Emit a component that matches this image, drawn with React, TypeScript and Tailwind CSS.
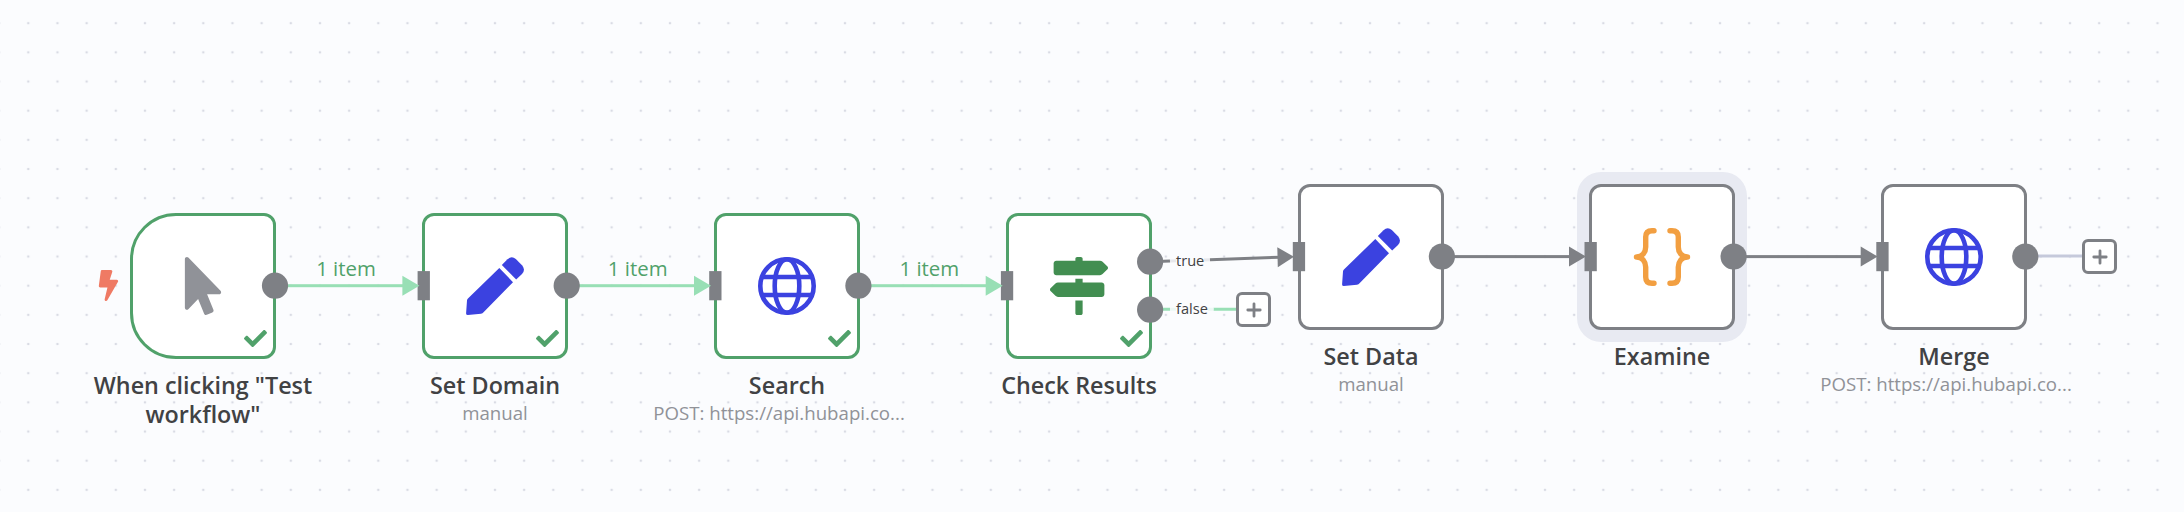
import { FaBolt, FaCheck, FaMapSigns, FaMousePointer } from "react-icons/fa";
import type { ReactNode } from "react";

const GREEN = "#98dfb5";
const GRAY = "#7e8085";

function Pen() {
  return (
    <svg viewBox="0 0 58 58" className="h-[58px] w-[58px]" fill="#3b42e0">
      <path d="M33.300 11 47 25.200 17.800 55Q16.600 56.400 15 56.800L1.800 58Q0 58 .1 56.200L1 43.500Q1.100 42 2.200 41.200Z" />
      <path d="M35.800 8 41.500 2.300Q45.500-1.500 49.800 2L56 8.200Q60 12.500 56 17L50.200 22.500Z" />
    </svg>
  );
}

function Globe() {
  return (
    <svg viewBox="0 0 58 58" className="h-[58px] w-[58px]" fill="none" stroke="#3b42e0" strokeWidth="4.6">
      <circle cx="29" cy="29" r="26.700" />
      <ellipse cx="29" cy="29" rx="12.300" ry="26.700" />
      <path d="M4 20H54M4 38H54" />
    </svg>
  );
}

function Braces() {
  return (
    <svg viewBox="0 0 58 58" className="h-[58px] w-[58px]" fill="none" stroke="#f29f41" strokeWidth="5.4" strokeLinecap="round" strokeLinejoin="round">
      <path d="M21 2.700H19Q12.700 2.700 12.700 9V19C12.700 24 9.500 29 3.500 29C9.500 29 12.700 34 12.700 39V49Q12.700 55.300 19 55.300H21" />
      <path d="M37 2.700H39Q45.300 2.700 45.300 9V19C45.300 24 48.500 29 54.500 29C48.500 29 45.300 34 45.300 39V49Q45.300 55.300 39 55.300H37" />
    </svg>
  );
}

type NodeProps = {
  place: string;
  icon: ReactNode;
  label: string;
  sub?: string;
  done?: boolean;
  trigger?: boolean;
  selected?: boolean;
};

function Node({ place, icon, label, sub, done, trigger, selected }: NodeProps) {
  return (
    <div className={`absolute flex w-[146px] flex-col items-center ${place}`}>
      <div
        className={`relative flex h-[146px] w-[146px] shrink-0 items-center justify-center border-[3px] bg-white ${
          done ? "border-[#50a16a]" : "border-[#7e8085]"
        } ${trigger ? "rounded-[12px] rounded-l-[46px]" : "rounded-[12px]"} ${
          selected ? "shadow-[0_0_0_12px_#e8eaf2]" : ""
        }`}
      >
        {icon}
        {done && <FaCheck className="absolute right-[6px] bottom-[6px] h-[23px] w-[23px] text-[#50a16a]" />}
      </div>
      <div className="mt-[12px] w-[250px] text-center text-[23.330px] leading-[29.170px] font-semibold text-[#414244]">{label}</div>
      {sub && (
        <div
          className={`w-[270px] text-center text-[18.670px] leading-[26px] whitespace-nowrap text-[#909298] ${
            sub.length > 20 ? "pr-[16px]" : ""
          }`}
        >
          {sub}
        </div>
      )}
    </div>
  );
}

function Dots() {
  return (
    <svg className="absolute inset-0 h-full w-full">
      <defs>
        <pattern id="dots" x="13.700" y="8.600" width="29.167" height="29.167" patternUnits="userSpaceOnUse">
          <circle cx="14.600" cy="14.600" r="1.300" fill="#d9dbe4" />
        </pattern>
      </defs>
      <rect width="2184" height="512" fill="url(#dots)" />
    </svg>
  );
}

const links = [
  { x: 275.200, y: 285.700, color: GREEN },
  { x: 566.800, y: 285.700, color: GREEN },
  { x: 858.500, y: 285.700, color: GREEN },
  { x: 1441.800, y: 256.600, color: GRAY },
  { x: 1733.500, y: 256.600, color: GRAY },
];

const inputs = [
  [423.800, 285.700],
  [715.400, 285.700],
  [1007.100, 285.700],
  [1299, 256.600],
  [1590.700, 256.600],
  [1882.500, 256.600],
];

const outputs = [
  [275, 285.700],
  [566.700, 285.700],
  [858.400, 285.700],
  [1150.100, 261.700],
  [1150.100, 309.700],
  [1441.900, 256.600],
  [1733.600, 256.600],
  [2025.300, 256.600],
];

function Wires() {
  return (
    <svg className="absolute inset-0 h-full w-full">
      {inputs.map(([x, y]) => (
        <rect key={x} x={x - 6.200} y={y - 14.600} width="12.300" height="29.200" fill={GRAY} />
      ))}
      {links.map(({ x, y, color }) => (
        <g key={x} fill={color} stroke="none">
          <rect x={x} y={y - 1.500} width="130" height="3" />
          <path d={`M${x + 127.200} ${y - 10}v20l17-10z`} />
        </g>
      ))}
      <path d="M1150 261.700 1170 261" stroke={GRAY} strokeWidth="3" />
      <path d="M1170 261 1210 259.700" stroke="#e7e8ec" strokeWidth="3" />
      <path d="M1210 259.700 1280 257.200" stroke={GRAY} strokeWidth="3" />
      <path d="M1277.300 247.200 1277.800 267.200 1294 256.800Z" fill={GRAY} />
      <path d="M1150 309.200H1170M1213.500 309.200H1238" stroke={GREEN} strokeWidth="3" />
      <path d="M1170 309.200H1213.500" stroke="#edf8f4" strokeWidth="3" />
      <path d="M2025 256H2083" stroke="#c5c9db" strokeWidth="3" />
      {outputs.map(([x, y]) => (
        <circle key={`${x}-${y}`} cx={x} cy={y} r="13.100" fill={GRAY} />
      ))}
    </svg>
  );
}

function AddButton({ place }: { place: string }) {
  return (
    <div className={`absolute flex h-[35px] w-[35px] items-center justify-center rounded-[6px] border-[3px] border-[#7e8085] bg-white ${place}`}>
      <svg viewBox="0 0 16 16" className="h-4 w-4" stroke={GRAY} strokeWidth="2.800" strokeLinecap="round">
        <path d="M1.800 8H14.200M8 1.800V14.200" />
      </svg>
    </div>
  );
}

function ItemCount({ place }: { place: string }) {
  return <div className={`absolute w-[80px] text-center text-[20.400px] leading-[28px] text-[#50a16a] ${place}`}>1 item</div>;
}

function BranchLabel({ place, text }: { place: string; text: string }) {
  return (
    <div className={`absolute bg-[#fbfcfe] text-[14.600px] leading-[20px] text-[#414244] ${place}`}>{text}</div>
  );
}

export default function App() {
  return (
    <div className="relative h-[512px] w-[2184px] overflow-hidden bg-[#fbfcfe] font-['Open_Sans',sans-serif]">
      <Dots />
      <FaBolt className="absolute top-[270px] left-[93px] h-[31px] w-[31px] text-[#ef7a64]" />
      <Node place="left-[130px] top-[213px]" trigger done label={'When clicking "Test workflow"'} icon={<FaMousePointer className="h-[58px] w-[58px] text-[#909298]" />} />
      <Node place="left-[422px] top-[213px]" done label="Set Domain" sub="manual" icon={<Pen />} />
      <Node place="left-[714px] top-[213px]" done label="Search" sub="POST: https://api.hubapi.co..." icon={<Globe />} />
      <Node place="left-[1006px] top-[213px]" done label="Check Results" icon={<FaMapSigns className="h-[58px] w-[58px] text-[#428e51]" />} />
      <Node place="left-[1298px] top-[184px]" label="Set Data" sub="manual" icon={<Pen />} />
      <Node place="left-[1589px] top-[184px]" selected label="Examine" icon={<Braces />} />
      <Node place="left-[1881px] top-[184px]" label="Merge" sub="POST: https://api.hubapi.co..." icon={<Globe />} />
      <Wires />
      <ItemCount place="left-[306px] top-[254px]" />
      <ItemCount place="left-[597.700px] top-[254px]" />
      <ItemCount place="left-[889.300px] top-[254px]" />
      <BranchLabel place="left-[1176px] top-[250px]" text="true" />
      <BranchLabel place="left-[1176px] top-[298px]" text="false" />
      <AddButton place="left-[1236px] top-[292px]" />
      <AddButton place="left-[2082px] top-[239px]" />
    </div>
  );
}
